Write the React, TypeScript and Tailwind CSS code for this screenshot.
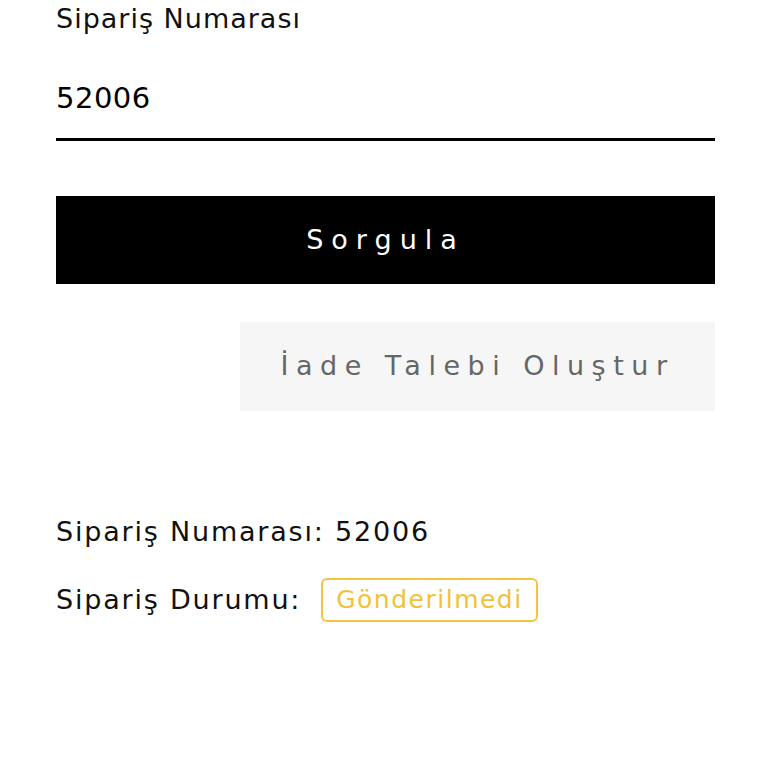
import { useState } from 'react'

export default function App() {
  const [order, setOrder] = useState('52006')

  return (
    <div className="min-h-screen bg-white font-['DejaVu_Sans',sans-serif] text-black">
      <div className="pl-[56px] pr-[53px]">
        {/* Order input */}
        <label className="block text-[27px] leading-[38px] tracking-[1px] text-[#111]">Sipariş Numarası</label>
        <input
          value={order}
          onChange={e => setOrder(e.target.value)}
          className="mt-[40px] block w-full border-b-[3px] border-black bg-transparent pb-[20px] text-[29px] leading-[40px] tracking-[0.5px] outline-none"
        />

        {/* Actions */}
        <button className="mt-[55px] flex h-[88px] w-full items-center justify-center bg-black text-[27px] tracking-[8px] text-white">
          Sorgula
        </button>
        <div className="mt-[38px] flex justify-end">
          <button className="flex h-[89px] w-[475px] items-center justify-center bg-[#f6f6f6] text-[27px] tracking-[7.5px] text-[#666]">
            İade Talebi Oluştur
          </button>
        </div>

        {/* Result */}
        <div className="mt-[99px] space-y-[24px] text-[27px] tracking-[1.8px] text-[#111]">
          <p className="leading-[44px]">Sipariş Numarası: 52006</p>
          <div className="flex items-center gap-[20px] leading-[44px]">
            <span>Sipariş Durumu:</span>
            <span className="rounded-[6px] border-2 border-[#f2c53d] px-[13px] text-[25px] leading-[40px] tracking-[1.5px] text-[#f0c23b]">
              Gönderilmedi
            </span>
          </div>
        </div>
      </div>
    </div>
  )
}
